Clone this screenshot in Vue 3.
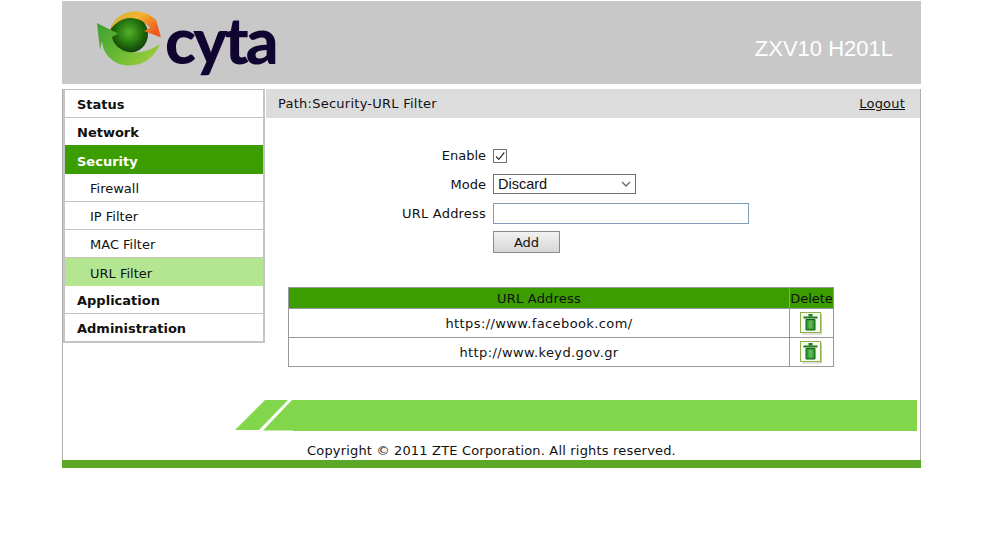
<template>
  <div class="page">
    <!-- Header -->
    <header class="banner">
      <svg class="globe" viewBox="95 8 72 60" width="72" height="60">
        <defs>
          <radialGradient id="ball" cx="0.5" cy="0.45" r="0.55">
            <stop offset="0" stop-color="#58b028" />
            <stop offset="0.55" stop-color="#26780f" />
            <stop offset="1" stop-color="#123c08" />
          </radialGradient>
          <linearGradient id="orange" x1="0" y1="0" x2="1" y2="0.6">
            <stop offset="0" stop-color="#c8b038" />
            <stop offset="0.5" stop-color="#f4b430" />
            <stop offset="1" stop-color="#ee5a1c" />
          </linearGradient>
          <linearGradient id="green" x1="0" y1="0" x2="1" y2="0.7">
            <stop offset="0" stop-color="#3e9e34" />
            <stop offset="0.6" stop-color="#6cbc34" />
            <stop offset="1" stop-color="#9ccc3c" />
          </linearGradient>
        </defs>
        <circle cx="129" cy="34" r="19" fill="url(#ball)" />
        <path fill="url(#orange)" d="M110 30C113 18 124 11.500 135 11.500C143 11.500 150 14 156 20L155.500 18L161 37.500L144 31L150 28C146 22 138 18 130 18C122 18 115 23 110 30Z" />
        <path fill="url(#green)" d="M97 23L118 33.500L112 37C114 47 124 53 135 52.500C145 52 153 49 160 44C155 57 143 65.500 130 65.500C114 65.500 103 55 102 41L100 50Z" />
      </svg>
      <div class="brand">cyta</div>
      <div class="model">ZXV10 H201L</div>
    </header>

    <div class="frame">
      <div class="main">
        <!-- Menu -->
        <nav class="menu">
          <div
            v-for="item in menu"
            :key="item.name"
            class="menu-item"
            :class="[item.sub ? 'sub' : 'top', { current: item.current, open: item.open, 'before-open': item.beforeOpen }]"
          >{{ item.name }}</div>
        </nav>

        <div class="content">
          <div class="path">
            <span class="path-text">Path:Security-URL Filter</span>
            <a class="logout">Logout</a>
          </div>

          <!-- Form -->
          <div class="form">
            <div class="row">
              <label>Enable</label>
              <span class="check">
                <svg viewBox="0 0 12 12" width="12" height="12">
                  <path d="M2 6.500L4.800 9.300L10.300 2.500" fill="none" stroke="#333" stroke-width="1.200" />
                </svg>
              </span>
            </div>
            <div class="row">
              <label>Mode</label>
              <select v-model="mode" class="mode">
                <option>Discard</option>
                <option>Permit</option>
              </select>
            </div>
            <div class="row">
              <label class="wide">URL Address</label>
              <input v-model="url" class="url" />
            </div>
            <div class="row">
              <label></label>
              <button class="add">Add</button>
            </div>
          </div>

          <!-- List -->
          <table class="urls">
            <thead>
              <tr>
                <th class="addr">URL Address</th>
                <th class="del">Delete</th>
              </tr>
            </thead>
            <tbody>
              <tr v-for="u in urls" :key="u">
                <td class="link">{{ u }}</td>
                <td>
                  <svg class="trash" viewBox="0 0 23 23" width="23" height="23">
                    <rect x="0.500" y="0.500" width="20" height="20" fill="#f6faf0" stroke="#8fb04a" />
                    <path d="M21.500 2V22H2" fill="none" stroke="#c4c4c4" />
                    <rect x="8.500" y="2" width="4" height="2.500" fill="#1d7a1d" />
                    <rect x="3.500" y="4.500" width="14" height="2" fill="#1d7a1d" />
                    <path d="M6 7.500H15V18H6Z" fill="#2f9a2f" stroke="#14601a" />
                    <rect x="8.500" y="8.500" width="4" height="8" fill="#62b452" />
                  </svg>
                </td>
              </tr>
            </tbody>
          </table>
        </div>
      </div>

      <!-- Footer -->
      <div class="stripe">
        <svg class="slants" viewBox="0 0 58 31" width="58" height="31">
          <path d="M0 30L30 0H54L26 30Z" fill="#82d64c" />
          <path d="M24 30L53 0H58V31H28Z" fill="#fff" />
          <path d="M28 30.500L57 0H58V30.500Z" fill="#82d64c" />
        </svg>
        <div class="stripe-bar"></div>
      </div>
      <div class="copyright">Copyright © 2011 ZTE Corporation. All rights reserved.</div>
    </div>
    <div class="bottom"></div>
  </div>
</template>

<script setup>
import { ref } from 'vue'

const mode = ref('Discard')
const url = ref('')

const menu = [
  { name: 'Status' },
  { name: 'Network', beforeOpen: true },
  { name: 'Security', open: true },
  { name: 'Firewall', sub: true },
  { name: 'IP Filter', sub: true },
  { name: 'MAC Filter', sub: true },
  { name: 'URL Filter', sub: true, current: true },
  { name: 'Application' },
  { name: 'Administration' }
]

const urls = ['https://www.facebook.com/', 'http://www.keyd.gov.gr']
</script>

<style>
html,
body {
  margin: 0;
  background: #fff;
}
</style>

<style scoped>
.page {
  width: 859px;
  margin: 1px 0 0 62px;
  font-family: "DejaVu Sans", Verdana, sans-serif;
  font-size: 13px;
  color: #111;
}

.banner {
  height: 83px;
  background: #c8c8c8;
  display: flex;
  align-items: flex-start;
  padding-left: 33px;
  box-sizing: border-box;
}

.globe {
  margin-top: 7px;
  flex: none;
}

.brand {
  font-family: "Lato", sans-serif;
  font-weight: 900;
  font-size: 64px;
  line-height: 78px;
  margin-left: -2px;
  color: #0f0530;
  letter-spacing: -2.800px;
}

.model {
  margin-left: auto;
  margin-right: 28px;
  margin-top: 36px;
  font-family: "Liberation Sans", Arial, sans-serif;
  font-size: 22px;
  line-height: 24px;
  color: #fff;
}

.frame {
  margin-top: 5px;
  height: 371px;
  border-left: 1px solid #b0b0b0;
  border-right: 1px solid #b0b0b0;
  box-sizing: border-box;
}

.main {
  display: flex;
  height: 311px;
}

.menu {
  flex: none;
  width: 202px;
  height: 254px;
  box-sizing: border-box;
  border: 1px solid #c4c4c4;
  border-left-width: 2px;
  border-right-width: 2px;
  border-bottom-width: 2px;
}

.menu-item {
  height: 28px;
  padding-top: 1px;
  line-height: 28px;
  box-sizing: border-box;
  border-bottom: 1px solid #c4c4c4;
}

.menu-item:last-child {
  border-bottom: 0;
  height: 27px;
}

.top {
  padding-left: 12px;
  font-weight: bold;
}

.sub {
  padding-left: 25px;
}

.before-open {
  height: 27px;
  border-bottom: 0;
}

.open {
  background: #3c9d00;
  color: #fff;
  border-bottom: 0;
  height: 29px;
  padding-top: 4px;
  line-height: 26px;
}

.current {
  background: #b4e691;
  border-bottom: 0;
  padding-top: 3px;
  line-height: 26px;
}

.content {
  flex: 1;
  margin-left: 1px;
}

.path {
  height: 29px;
  background: #dcdcdc;
  display: flex;
  justify-content: space-between;
  align-items: center;
  padding: 0 15px 0 12px;
  box-sizing: border-box;
}

.path-text {
  letter-spacing: 0.250px;
}

.logout {
  text-decoration: underline;
  letter-spacing: 0.200px;
}

.form {
  margin-top: 23px;
}

.row {
  display: flex;
  align-items: center;
  height: 29px;
}

.row label {
  width: 220px;
  text-align: right;
  margin-right: 7px;
  flex: none;
}

.row .wide {
  letter-spacing: 0.200px;
}

.check {
  width: 14px;
  height: 14px;
  box-sizing: border-box;
  border: 1px solid #707070;
  background: #fff;
  display: block;
}

.check svg {
  display: block;
}

.mode {
  appearance: none;
  width: 143px;
  height: 20px;
  margin-bottom: 1px;
  font-family: "Liberation Sans", Arial, sans-serif;
  font-size: 14.500px;
  border: 1px solid #707070;
  border-radius: 0;
  background: #fff url("data:image/svg+xml,%3Csvg xmlns='http://www.w3.org/2000/svg' width='10' height='6'%3E%3Cpath d='M1 1L5 5L9 1' fill='none' stroke='%23666' stroke-width='1.300'/%3E%3C/svg%3E") no-repeat right 4px center;
  color: #111;
  padding: 0 0 0 4px;
  outline: 0;
}

.url {
  width: 256px;
  height: 21px;
  box-sizing: border-box;
  border: 1px solid #7f9db9;
  padding: 0 2px;
  outline: 0;
}

.add {
  width: 67px;
  height: 22px;
  margin-bottom: 1px;
  padding: 1px 0 0;
  font-family: "DejaVu Sans", Verdana, sans-serif;
  font-size: 13px;
  color: #111;
  border: 1px solid #8a8a8a;
  background: linear-gradient(#f2f2f2, #d6d6d6);
}

.urls {
  margin: 30px 0 0 22px;
  width: 544px;
  border-collapse: collapse;
  table-layout: fixed;
}

.urls th,
.urls td {
  border: 1px solid #999;
  padding: 0;
  text-align: center;
}

.urls th {
  background: #3c9d00;
  height: 20px;
  font-weight: normal;
  color: #111;
}

.urls td {
  height: 28px;
}

.urls .addr {
  width: 500px;
  letter-spacing: 0.200px;
}

.urls .del {
  width: 43px;
}

.urls .link {
  letter-spacing: 0.400px;
}

.trash {
  display: block;
  margin: 0 auto;
}

.stripe {
  display: flex;
  margin-left: 172px;
  margin-right: 3px;
  height: 31px;
}

.slants {
  flex: none;
}

.stripe-bar {
  flex: 1;
  background: #82d64c;
}

.copyright {
  margin: 11px 0 0 244px;
  line-height: 18px;
  letter-spacing: 0.180px;
}

.bottom {
  height: 8px;
  background: #5ba826;
}
</style>
